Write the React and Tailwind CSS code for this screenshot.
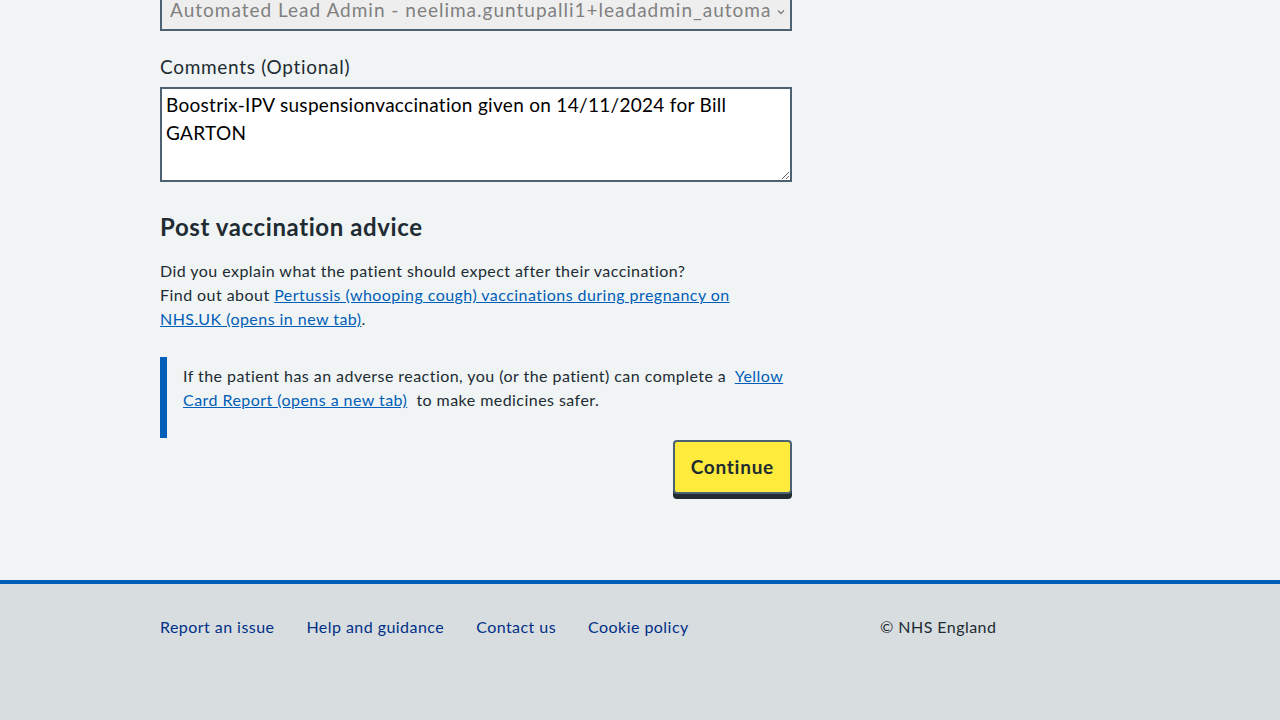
import React from "react";

const font = { fontFamily: "Lato, 'Liberation Sans', sans-serif" };

export default function App() {
  return (
    <div className="min-h-[720px] bg-[#f0f4f5] text-[#212b32] flex flex-col font-['Lato','Liberation_Sans',sans-serif]">
      {/* Main form */}
      <main className="w-[632px] ml-[160px] pb-[80px]">
        {/* Disabled select */}
        <div className="mt-[-10px] h-[41px] border-2 border-[#4c6272] bg-[#eeeeee] flex items-center pl-[8px] pr-[4px]">
          <span className="flex-1 text-[19px] text-[#808080] whitespace-nowrap overflow-hidden tracking-[1px]">
            Automated Lead Admin - neelima.guntupalli1+leadadmin_automa
          </span>
          <svg width="10" height="10" viewBox="0 0 10 10" className="ml-[3px] mt-[2px]">
            <path d="M2 3.5 L5 6.5 L8 3.5" fill="none" stroke="#808080" strokeWidth="1.4" />
          </svg>
        </div>

        {/* Comments */}
        <label className="block mt-[22px] mb-[6px] text-[19px] leading-[28px] tracking-[0.7px]">Comments (Optional)</label>
        <textarea
          defaultValue="Boostrix-IPV suspensionvaccination given on 14/11/2024 for Bill GARTON"
          style={font}
          className="block w-full h-[95px] border-2 border-[#4c6272] bg-white px-[4px] py-[2px] text-[19px] leading-[28px] tracking-[0.3px] text-black outline-none"
        />

        {/* Post vaccination advice */}
        <h2 className="mt-[29px] text-[24px] leading-[32px] font-bold tracking-[0.6px]">Post vaccination advice</h2>
        <p className="mt-[16px] text-[16px] leading-[24px] tracking-[0.45px]">
          Did you explain what the patient should expect after their vaccination?
          <br />
          Find out about{" "}
          <a href="#" className="text-[#005eb8] underline">
            Pertussis (whooping cough) vaccinations during pregnancy on NHS.UK (opens in new tab)
          </a>
          .
        </p>

        {/* Inset text */}
        <div className="mt-[26px] border-l-[7px] border-[#005eb8] pl-[16px] pt-[7px] pb-[26px]">
          <p className="text-[16px] leading-[24px] tracking-[0.45px]">
            If the patient has an adverse reaction, you (or the patient) can complete a{"\u00a0 "}
            <a href="#" className="text-[#005eb8] underline">
              Yellow Card Report (opens a new tab)
            </a>
            {"\u00a0 "}to make medicines safer.
          </p>
        </div>

        <div className="flex justify-end mt-[2px]">
          <button className="h-[54px] px-[16px] bg-[#ffeb3b] border-2 border-[#4c6272] rounded-[4px] shadow-[0_5px_0_#212b32] text-[19px] font-bold tracking-[0.75px] text-[#212b32]">
            Continue
          </button>
        </div>
      </main>

      {/* Footer */}
      <footer className="mt-auto border-t-4 border-[#005eb8] bg-[#d8dde0] h-[140px]">
        <div className="ml-[160px] pt-[31px] flex text-[16px] leading-[24px] tracking-[0.45px]">
          <ul className="w-[720px] flex gap-[32px] text-[#003087]">
            <li><a href="#">Report an issue</a></li>
            <li><a href="#">Help and guidance</a></li>
            <li><a href="#">Contact us</a></li>
            <li><a href="#">Cookie policy</a></li>
          </ul>
          <p>© NHS England</p>
        </div>
      </footer>
    </div>
  );
}
